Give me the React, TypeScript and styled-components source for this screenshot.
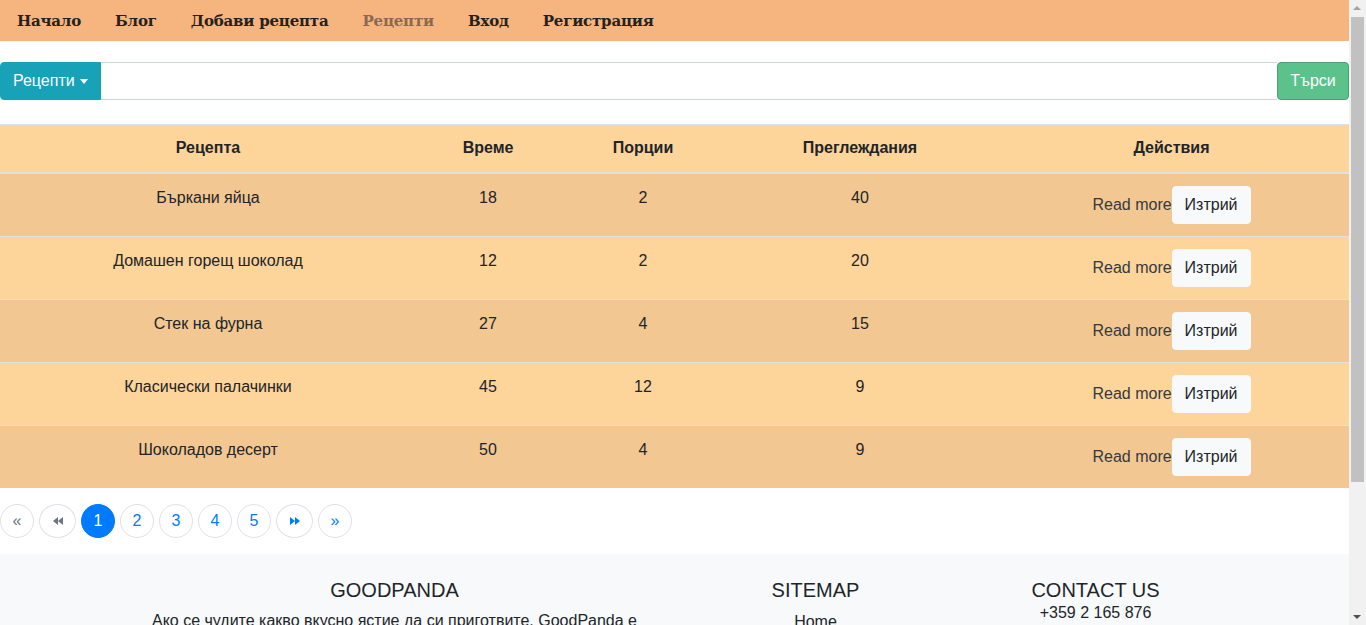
import styled, { createGlobalStyle } from "styled-components";

const GlobalStyle = createGlobalStyle`
    body {
        margin: 0;
        font-family: "Liberation Sans", Arial, sans-serif;
        font-size: 16px;
        color: #212529;
        background: #fff;
    }
    * { box-sizing: border-box; }
`;

const Page = styled.div`
    margin-right: 17px;
`;

// the window's scrollbar, drawn over the right edge
const ScrollBar = styled.div`
    position: fixed;
    top: 0;
    right: 0;
    width: 17px;
    height: 100vh;
    background-color: #f1f1f1;
    display: flex;
    flex-direction: column;
    align-items: center;
    &::before,
    &::after {
        content: "";
        position: absolute;
        left: 4px;
        border-left: 4px solid transparent;
        border-right: 4px solid transparent;
    }
    &::before {
        top: 6px;
        border-bottom: 4px solid #a3a3a3;
    }
    &::after {
        bottom: 6px;
        border-top: 4px solid #505050;
    }
`;

const ScrollThumb = styled.div`
    margin-top: 17px;
    width: 13px;
    height: 465px;
    background-color: #c1c1c1;
`;

const Nav = styled.nav`
    display: flex;
    align-items: center;
    height: 41px;
    padding: 0;
    background-color: #f6b47e;
`;

const NavLink = styled.a<{ $active?: boolean }>`
    padding: 0 17px;
    font-family: "DejaVu Serif", "Liberation Serif", serif;
    font-weight: 700;
    font-size: 15px;
    color: ${(p) => (p.$active ? "#8a6853" : "#222")};
    text-decoration: none;
    letter-spacing: -0.2px;
`;

const SearchBar = styled.form`
    display: flex;
    margin: 21px 0 24px;
    height: 38px;
`;

const DropButton = styled.button`
    display: flex;
    align-items: center;
    gap: 5px;
    padding: 0 12px;
    background-color: #17a2b8;
    color: #fff;
    border: 1px solid #17a2b8;
    border-radius: 4px 0 0 4px;
    font-family: inherit;
    font-size: 16px;
    &::after {
        content: "";
        border-top: 5px solid #fff;
        border-left: 4px solid transparent;
        border-right: 4px solid transparent;
        margin-top: 1px;
    }
`;

const SearchInput = styled.input`
    flex: 1;
    border: 1px solid #ced4da;
    border-left: 0;
    border-right: 0;
    font-size: 16px;
    outline: none;
`;

const SearchButton = styled.button`
    width: 72px;
    background-color: #5bc28b;
    color: #fff;
    border: 1px solid #4e9e75;
    border-radius: 4px;
    font-family: inherit;
    font-size: 16px;
`;

const Table = styled.table`
    width: 100%;
    border-collapse: collapse;
    table-layout: fixed;
    border-top: 1px solid #dee2e6;
`;

const Th = styled.th<{ $w: number }>`
    width: ${(p) => p.$w}px;
    height: 48px;
    padding: 12px;
    background-color: #fdd49a;
    font-weight: 700;
    text-align: center;
    border-bottom: 2px solid #dee2e6;
`;

const Row = styled.tr<{ $odd: boolean }>`
    background-color: ${(p) => (p.$odd ? "#f2c792" : "#fdd49a")};
    border-top: 1px solid #dee2e6;
`;

const Td = styled.td`
    padding: 12px;
    text-align: center;
    vertical-align: top;
    line-height: 24px;
`;

const ReadMore = styled.a`
    color: #343a40;
    text-decoration: none;
`;

const DeleteButton = styled.button`
    height: 38px;
    padding: 0 12px;
    background-color: #f8f9fa;
    border: 1px solid #f8f9fa;
    border-radius: 4px;
    color: #212529;
    font-family: inherit;
    font-size: 16px;
`;

const Pager = styled.ul`
    display: flex;
    gap: 5px;
    list-style: none;
    margin: 16px 0;
    padding: 0;
`;

const PageItem = styled.li<{ $active?: boolean; $muted?: boolean; $wide?: boolean }>`
    display: flex;
    align-items: center;
    justify-content: center;
    width: ${(p) => (p.$wide ? 37 : 34)}px;
    height: 34px;
    border-radius: 50%;
    border: 1px solid ${(p) => (p.$active ? "#007bff" : "#dee2e6")};
    background-color: ${(p) => (p.$active ? "#007bff" : "#fff")};
    color: ${(p) => (p.$active ? "#fff" : p.$muted ? "#6c757d" : "#007bff")};
    font-size: 16px;
`;

const Footer = styled.footer`
    background-color: #f8f9fa;
    padding: 24px 0 40px;
`;

const FooterGrid = styled.div`
    display: grid;
    grid-template-columns: 579px 263px 297px;
    width: 1139px;
    margin: 0 auto;
`;

const FooterCol = styled.div<{ $wide?: boolean }>`
    padding: 0 ${(p) => (p.$wide ? 40 : 15)}px;
    text-align: center;
`;

const FooterTitle = styled.h5`
    margin: 0 0 8px;
    font-size: 20px;
    font-weight: 400;
    line-height: 24px;
`;

const ContactTitle = styled(FooterTitle)`
    margin-bottom: 0;
`;

const FooterText = styled.p`
    margin: 0 0 6px;
    font-size: 16px;
    line-height: 22px;
`;

const FooterLink = styled.a`
    display: block;
    color: #212529;
    font-size: 16px;
    line-height: 24px;
    text-decoration: none;
`;

const Chevrons = ({ dir }: { dir: "left" | "right" }) => (
    <svg width="10" height="8" viewBox="0 0 10 8">
        {dir === "left" ? (
            <path d="M5 0 L0 4 L5 8 Z M10 0 L5 4 L10 8 Z" fill="currentColor" />
        ) : (
            <path d="M0 0 L5 4 L0 8 Z M5 0 L10 4 L5 8 Z" fill="currentColor" />
        )}
    </svg>
);

const recipes = [
    { name: "Бъркани яйца", time: 18, portions: 2, views: 40 },
    { name: "Домашен горещ шоколад", time: 12, portions: 2, views: 20 },
    { name: "Стек на фурна", time: 27, portions: 4, views: 15 },
    { name: "Класически палачинки", time: 45, portions: 12, views: 9 },
    { name: "Шоколадов десерт", time: 50, portions: 4, views: 9 },
];

export default function App() {
    return (
        <Page>
            <GlobalStyle />
            <Nav>
                <NavLink href="#">Начало</NavLink>
                <NavLink href="#">Блог</NavLink>
                <NavLink href="#">Добави рецепта</NavLink>
                <NavLink href="#" $active>Рецепти</NavLink>
                <NavLink href="#">Вход</NavLink>
                <NavLink href="#">Регистрация</NavLink>
            </Nav>
            <SearchBar onSubmit={(e) => e.preventDefault()}>
                <DropButton type="button">Рецепти</DropButton>
                <SearchInput type="text" />
                <SearchButton type="submit">Търси</SearchButton>
            </SearchBar>
            <Table>
                <thead>
                    <tr>
                        <Th $w={416}>Рецепта</Th>
                        <Th $w={144}>Време</Th>
                        <Th $w={166}>Порции</Th>
                        <Th $w={268}>Преглеждания</Th>
                        <Th $w={355}>Действия</Th>
                    </tr>
                </thead>
                <tbody>
                    {recipes.map((r, i) => (
                        <Row key={r.name} $odd={i % 2 === 0}>
                            <Td>{r.name}</Td>
                            <Td>{r.time}</Td>
                            <Td>{r.portions}</Td>
                            <Td>{r.views}</Td>
                            <Td>
                                <ReadMore href="#">Read more</ReadMore>
                                <DeleteButton>Изтрий</DeleteButton>
                            </Td>
                        </Row>
                    ))}
                </tbody>
            </Table>
            <Pager>
                <PageItem $muted>«</PageItem>
                <PageItem $muted $wide><Chevrons dir="left" /></PageItem>
                <PageItem $active>1</PageItem>
                <PageItem>2</PageItem>
                <PageItem>3</PageItem>
                <PageItem>4</PageItem>
                <PageItem>5</PageItem>
                <PageItem $wide><Chevrons dir="right" /></PageItem>
                <PageItem>»</PageItem>
            </Pager>
            <Footer>
                <FooterGrid>
                    <FooterCol $wide>
                        <FooterTitle>GOODPANDA</FooterTitle>
                        <FooterText>
                            Ако се чудите какво вкусно ястие да си приготвите, GoodPanda е
                            мястото за вас. Тук ще откриете рецепти за всеки вкус и повод.
                        </FooterText>
                    </FooterCol>
                    <FooterCol>
                        <FooterTitle>SITEMAP</FooterTitle>
                        <FooterLink href="#">Home</FooterLink>
                        <FooterLink href="#">Blog</FooterLink>
                        <FooterLink href="#">Recipes</FooterLink>
                    </FooterCol>
                    <FooterCol>
                        <ContactTitle>CONTACT US</ContactTitle>
                        <FooterText>+359 2 165 876</FooterText>
                        <FooterText>goodpanda@mail.bg</FooterText>
                    </FooterCol>
                </FooterGrid>
            </Footer>
            <ScrollBar>
                <ScrollThumb />
            </ScrollBar>
        </Page>
    );
}
